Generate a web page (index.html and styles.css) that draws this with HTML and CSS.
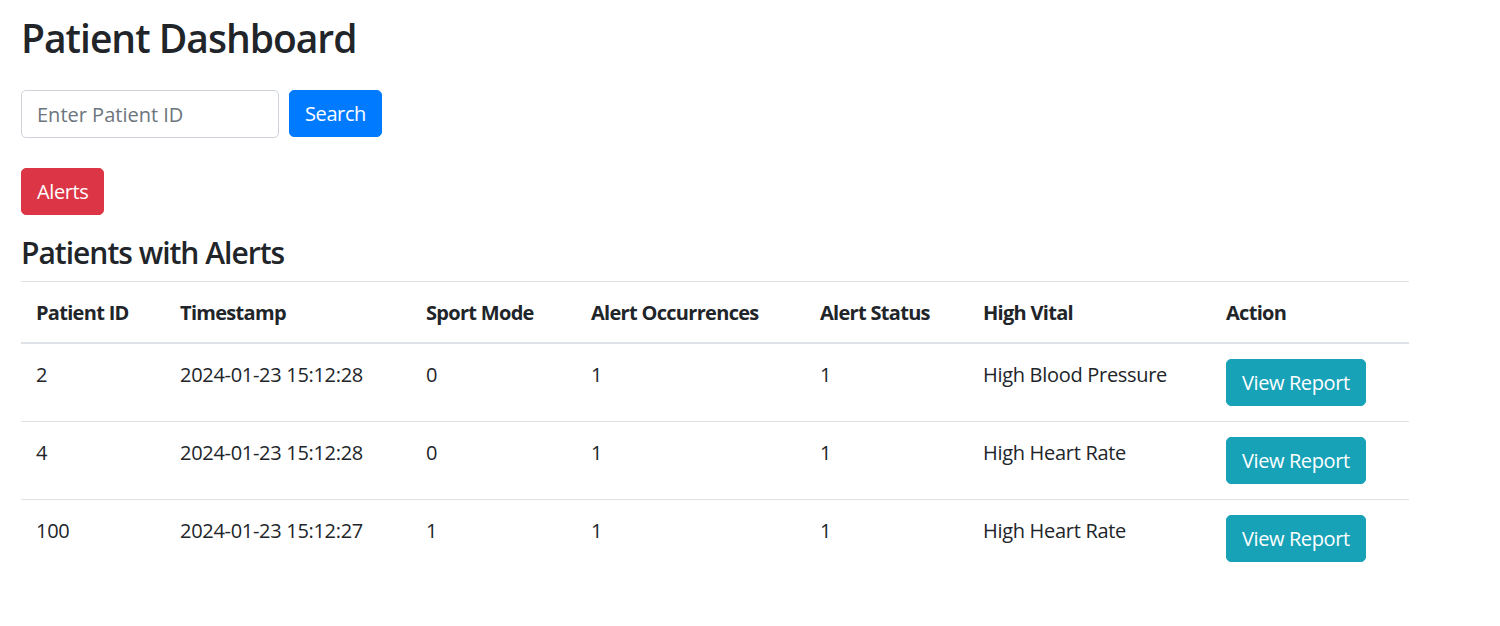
FILE: index.html
```html
<!DOCTYPE html>
<html lang="en">
<head>
<meta charset="utf-8">
<title>Patient Dashboard</title>
<link rel="stylesheet" href="styles.css">
</head>
<body>
<div class="container">
  <h1 class="title">Patient Dashboard</h1>
  <form class="search-form">
    <input class="form-control" type="text" placeholder="Enter Patient ID">
    <button class="btn btn-primary" type="button">Search</button>
  </form>
  <button class="btn btn-danger" type="button">Alerts</button>
  <h4 class="section-title">Patients with Alerts</h4>
  <table class="table">
    <colgroup>
      <col class="c1"><col class="c2"><col class="c3"><col class="c4"><col class="c5"><col class="c6"><col class="c7">
    </colgroup>
    <thead>
      <tr>
        <th>Patient ID</th>
        <th>Timestamp</th>
        <th>Sport Mode</th>
        <th>Alert Occurrences</th>
        <th>Alert Status</th>
        <th>High Vital</th>
        <th>Action</th>
      </tr>
    </thead>
    <tbody>
      <tr>
        <td>2</td>
        <td>2024-01-23 15:12:28</td>
        <td>0</td>
        <td>1</td>
        <td>1</td>
        <td>High Blood Pressure</td>
        <td><button class="btn btn-info" type="button">View Report</button></td>
      </tr>
      <tr>
        <td>4</td>
        <td>2024-01-23 15:12:28</td>
        <td>0</td>
        <td>1</td>
        <td>1</td>
        <td>High Heart Rate</td>
        <td><button class="btn btn-info" type="button">View Report</button></td>
      </tr>
      <tr>
        <td>100</td>
        <td>2024-01-23 15:12:27</td>
        <td>1</td>
        <td>1</td>
        <td>1</td>
        <td>High Heart Rate</td>
        <td><button class="btn btn-info" type="button">View Report</button></td>
      </tr>
    </tbody>
  </table>
</div>
</body>
</html>
```
FILE: styles.css
```css
* { box-sizing: border-box; }
body {
  margin: 0;
  font-family: "Segoe UI", "Open Sans", "Noto Sans", sans-serif;
  font-size: 20px;
  line-height: 1.5;
  letter-spacing: -0.3px;
  color: #212529;
  background: #fff;
}
.container {
  width: 1409px;
  padding: 14px 0 0 21px;
}
.title {
  margin: 0 0 28px;
  font-size: 39px;
  font-weight: 600;
  line-height: 48px;
  letter-spacing: -1px;
}
.search-form {
  display: flex;
  gap: 10px;
  margin: 0 0 30px;
}
.form-control {
  width: 258px;
  height: 48px;
  padding: 7.5px 15px;
  font: inherit;
  color: #495057;
  border: 1px solid #ced4da;
  border-radius: 5px;
  background: #fff;
}
.form-control::placeholder { color: #6c757d; }
.btn {
  display: inline-block;
  height: 47px;
  padding: 7px 15px;
  font: inherit;
  line-height: 1.5;
  letter-spacing: -0.4px;
  border: 1px solid transparent;
  border-radius: 5px;
  color: #fff;
  cursor: pointer;
}
.btn-primary { background: #007bff; border-color: #007bff; }
.btn-danger { background: #dc3545; border-color: #dc3545; display: block; }
.btn-info { background: #17a2b8; border-color: #17a2b8; margin-top: -1px; margin-bottom: 1px; vertical-align: top; }
.section-title {
  margin: 20px 0 10px;
  font-size: 30px;
  font-weight: 600;
  line-height: 36px;
  letter-spacing: -1px;
}
.table {
  width: 1388px;
  border-collapse: collapse;
  table-layout: fixed;
}
.c1 { width: 144px; }
.c2 { width: 246px; }
.c3 { width: 165px; }
.c4 { width: 229px; }
.c5 { width: 163px; }
.c6 { width: 243px; }
.c7 { width: 198px; }
.table th, .table td {
  padding: 16px 15px 14px;
  text-align: left;
  vertical-align: top;
  border-top: 1px solid #dee2e6;
  white-space: nowrap;
}
.table th { font-weight: 700; letter-spacing: -0.7px; }
.table thead th { border-bottom: 2px solid #dee2e6; }
.table tbody tr:first-child td { border-top: 0; }
```
